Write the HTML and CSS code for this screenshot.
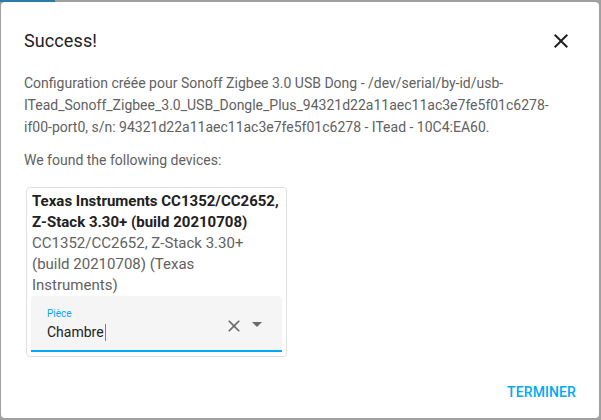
FILE: index.html
```html
<!DOCTYPE html>
<html lang="fr">
<head>
<meta charset="utf-8">
<link rel="stylesheet" href="styles.css">
</head>
<body>
<div class="backdrop">
  <div class="topstrip"><span class="tab"></span></div>
  <div class="dialog">
    <div class="header">
      <h2 class="title">Success!</h2>
      <button class="close" aria-label="close">
        <svg width="24" height="24" viewBox="0 0 24 24"><path d="M19 6.41 17.59 5 12 10.59 6.41 5 5 6.41 10.59 12 5 17.59 6.41 19 12 13.41 17.59 19 19 17.59 13.41 12z" fill="#212121"/></svg>
      </button>
    </div>
    <div class="content">
      <p class="msg">Configuration créée pour Sonoff Zigbee 3.0 USB Dong - /dev/serial/by-id/usb-ITead_Sonoff_Zigbee_3.0_USB_Dongle_Plus_94321d22a11aec11ac3e7fe5f01c6278-if00-port0, s/n: 94321d22a11aec11ac3e7fe5f01c6278 - ITead - 10C4:EA60.</p>
      <p class="msg">We found the following devices:</p>
      <div class="card">
        <div class="dev-name">Texas Instruments CC1352/CC2652, Z-Stack 3.30+ (build 20210708)</div>
        <div class="dev-desc">CC1352/CC2652, Z-Stack 3.30+ (build 20210708) (Texas Instruments)</div>
        <div class="field">
          <div class="field-main">
            <span class="label">Pièce</span>
            <span class="value">Chambre<span class="caret"></span></span>
          </div>
          <svg class="clear" viewBox="0 0 24 24"><path d="M19 6.41 17.59 5 12 10.59 6.41 5 5 6.41 10.59 12 5 17.59 6.41 19 12 13.41 17.59 19 19 17.59 13.41 12z" fill="#6b6b6b"/></svg>
          <svg class="drop" viewBox="0 0 24 24"><path d="M7 10l5 5 5-5z" fill="#6b6b6b"/></svg>
        </div>
      </div>
    </div>
    <div class="actions">
      <button class="btn">Terminer</button>
    </div>
  </div>
</div>
</body>
</html>
```

FILE: styles.css
```css
html, body {
  margin: 0;
  padding: 0;
}
body {
  background: #a0a0a0;
  font-family: Roboto, "Noto Sans", sans-serif;
}
.backdrop {
  width: 601px;
  height: 420px;
  display: flex;
  flex-direction: column;
  padding: 0 2px 2px 1px;
  box-sizing: border-box;
}
.topstrip {
  height: 2px;
  display: flex;
}
.tab {
  width: 55px;
  height: 2px;
  background: #2a7ba6;
  margin-left: -1px;
}
.dialog {
  flex: 1;
  background: #fff;
  border-radius: 4px;
  display: flex;
  flex-direction: column;
  padding: 0 23px;
}
.header {
  display: flex;
  align-items: center;
  justify-content: space-between;
  height: 62px;
  padding-top: 15px;
  box-sizing: border-box;
}
.title {
  margin: 0;
  font-size: 18px;
  font-weight: 400;
  color: #212121;
  letter-spacing: 0.1px;
}
.close {
  border: 0;
  background: none;
  padding: 0;
  width: 24px;
  height: 24px;
  margin-right: 3px;
  display: flex;
}
.content {
  flex: 1;
}
.msg {
  margin: 8px 0 11px;
  font-size: 14px;
  line-height: 22px;
  color: #616161;
}
.msg + .msg {
  margin: 0 0 16px;
}
.card {
  width: 261px;
  box-sizing: border-box;
  border: 1px solid #e0e0e0;
  border-radius: 4px;
  margin-left: 2px;
  padding: 3px 4px 4px 4px;
}
.dev-name {
  font-size: 15px;
  font-weight: 700;
  line-height: 21px;
  color: #212121;
  padding-left: 1px;
}
.dev-desc {
  font-size: 15px;
  line-height: 21px;
  color: #616161;
  padding-left: 1px;
}
.field {
  height: 56px;
  background: #f5f5f5;
  border-radius: 4px 4px 0 0;
  border-bottom: 2px solid #03a9f4;
  box-sizing: border-box;
  display: flex;
  align-items: flex-start;
  padding: 0 17px 0 16px;
}
.field-main {
  flex: 1;
  display: flex;
  flex-direction: column;
  padding-top: 12px;
}
.label {
  font-size: 10px;
  color: #03a9f4;
  line-height: 12px;
}
.value {
  font-size: 14px;
  color: #212121;
  line-height: 22px;
  margin-top: 1px;
  display: flex;
  align-items: center;
}
.caret {
  width: 1px;
  height: 17px;
  background: #03a9f4;
  margin-left: 1px;
}
.clear {
  width: 20px;
  height: 20px;
  margin-top: 20px;
  margin-right: 1px;
}
.drop {
  width: 24px;
  height: 24px;
  margin-top: 16px;
  margin-right: -4px;
}
.actions {
  display: flex;
  justify-content: flex-end;
  padding: 0 0 10px;
}
.btn {
  border: 0;
  background: none;
  font-family: Roboto, sans-serif;
  font-size: 14px;
  font-weight: 500;
  letter-spacing: 0.1px;
  text-transform: uppercase;
  color: #03a9f4;
  padding: 8px 0;
}
```
